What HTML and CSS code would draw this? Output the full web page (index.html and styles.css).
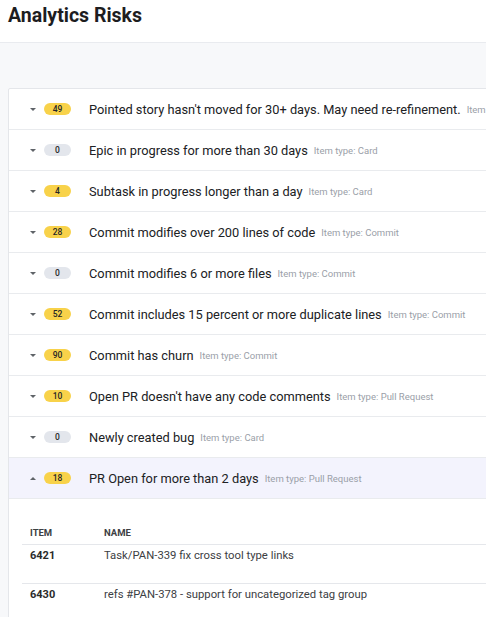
FILE: index.html
```html
<!DOCTYPE html>
<html lang="en">
<head>
<meta charset="utf-8">
<title>Analytics Risks</title>
<link rel="stylesheet" href="styles.css">
</head>
<body>
<header class="page-header">
  <h1 class="page-title">Analytics Risks</h1>
</header>
<main class="page-body">
  <section class="risk-card">
    <div class="risk-row">
      <span class="caret caret-down"></span>
      <span class="badge badge-warn">49</span>
      <span class="risk-name">Pointed story hasn't moved for 30+ days. May need re-refinement.</span>
      <span class="risk-type">Item type: Card</span>
    </div>
    <div class="risk-row">
      <span class="caret caret-down"></span>
      <span class="badge badge-zero">0</span>
      <span class="risk-name">Epic in progress for more than 30 days</span>
      <span class="risk-type">Item type: Card</span>
    </div>
    <div class="risk-row">
      <span class="caret caret-down"></span>
      <span class="badge badge-warn">4</span>
      <span class="risk-name">Subtask in progress longer than a day</span>
      <span class="risk-type">Item type: Card</span>
    </div>
    <div class="risk-row">
      <span class="caret caret-down"></span>
      <span class="badge badge-warn">28</span>
      <span class="risk-name">Commit modifies over 200 lines of code</span>
      <span class="risk-type">Item type: Commit</span>
    </div>
    <div class="risk-row">
      <span class="caret caret-down"></span>
      <span class="badge badge-zero">0</span>
      <span class="risk-name">Commit modifies 6 or more files</span>
      <span class="risk-type">Item type: Commit</span>
    </div>
    <div class="risk-row">
      <span class="caret caret-down"></span>
      <span class="badge badge-warn">52</span>
      <span class="risk-name">Commit includes 15 percent or more duplicate lines</span>
      <span class="risk-type">Item type: Commit</span>
    </div>
    <div class="risk-row">
      <span class="caret caret-down"></span>
      <span class="badge badge-warn">90</span>
      <span class="risk-name">Commit has churn</span>
      <span class="risk-type">Item type: Commit</span>
    </div>
    <div class="risk-row">
      <span class="caret caret-down"></span>
      <span class="badge badge-warn">10</span>
      <span class="risk-name">Open PR doesn't have any code comments</span>
      <span class="risk-type">Item type: Pull Request</span>
    </div>
    <div class="risk-row">
      <span class="caret caret-down"></span>
      <span class="badge badge-zero">0</span>
      <span class="risk-name">Newly created bug</span>
      <span class="risk-type">Item type: Card</span>
    </div>
    <div class="risk-row risk-row-open">
      <span class="caret caret-up"></span>
      <span class="badge badge-warn">18</span>
      <span class="risk-name">PR Open for more than 2 days</span>
      <span class="risk-type">Item type: Pull Request</span>
    </div>
    <div class="risk-detail">
      <table class="item-table">
        <thead>
          <tr>
            <th class="col-item">Item</th>
            <th>Name</th>
          </tr>
        </thead>
        <tbody>
          <tr>
            <td class="col-item item-id">6421</td>
            <td>Task/PAN-339 fix cross tool type links</td>
          </tr>
          <tr>
            <td class="col-item item-id">6430</td>
            <td>refs #PAN-378 - support for uncategorized tag group</td>
          </tr>
        </tbody>
      </table>
    </div>
  </section>
</main>
</body>
</html>
```

FILE: styles.css
```css
html, body {
  margin: 0;
  padding: 0;
  overflow: hidden;
}
body {
  font-family: Roboto, "Liberation Sans", Arial, sans-serif;
  color: #202124;
  background: #f7f8fa;
  width: 486px;
  height: 617px;
}
.page-header {
  background: #ffffff;
  height: 43px;
  box-sizing: border-box;
  border-bottom: 1px solid #e9ebef;
  padding: 4px 8px 0;
}
.page-title {
  margin: 0;
  font-size: 19.5px;
  line-height: 24px;
  font-weight: 700;
  color: #1d1d1f;
}
.page-body {
  padding: 45px 0 0 8px;
}
.risk-card {
  width: 640px;
  background: #ffffff;
  border: 1px solid #e4e6ea;
  border-radius: 2px;
}
.risk-row {
  display: flex;
  align-items: center;
  height: 40px;
  border-bottom: 1px solid #e9ebee;
  padding-left: 21px;
  white-space: nowrap;
}
.risk-row-open {
  background: #f3f3fd;
}
.caret {
  width: 0;
  height: 0;
  border-left: 3px solid transparent;
  border-right: 3px solid transparent;
  margin-right: 8px;
}
.caret-down {
  border-top: 3px solid #5f6368;
}
.caret-up {
  border-bottom: 3px solid #5f6368;
}
.badge {
  display: inline-flex;
  align-items: center;
  justify-content: center;
  box-sizing: border-box;
  width: 27px;
  height: 12px;
  border-radius: 6px;
  font-size: 8.5px;
  font-weight: 500;
  color: #262626;
  margin-right: 18px;
}
.badge-warn {
  background: #f8d24a;
}
.badge-zero {
  background: #e3e6ec;
}
.risk-name {
  font-size: 12.8px;
  color: #202124;
}
.risk-type {
  font-size: 9.5px;
  color: #9aa0a8;
  margin-left: 6px;
}
.risk-detail {
  padding: 21px 0 20px 13px;
}
.item-table {
  border-collapse: collapse;
  width: 600px;
}
.item-table th {
  text-align: left;
  font-size: 9.5px;
  font-weight: 700;
  text-transform: uppercase;
  color: #3c4043;
  height: 24px;
  padding: 0 0 0 8px;
  border-bottom: 1px solid #e5e7eb;
}
.item-table td {
  font-size: 11.3px;
  color: #3c4043;
  height: 39px;
  padding: 4px 0 0 8px;
  vertical-align: top;
  border-bottom: 1px solid #e5e7eb;
  box-sizing: border-box;
}
.item-table .col-item {
  width: 66px;
}
.item-table .item-id {
  font-size: 11px;
  font-weight: 700;
  color: #2b2b2b;
}
```
